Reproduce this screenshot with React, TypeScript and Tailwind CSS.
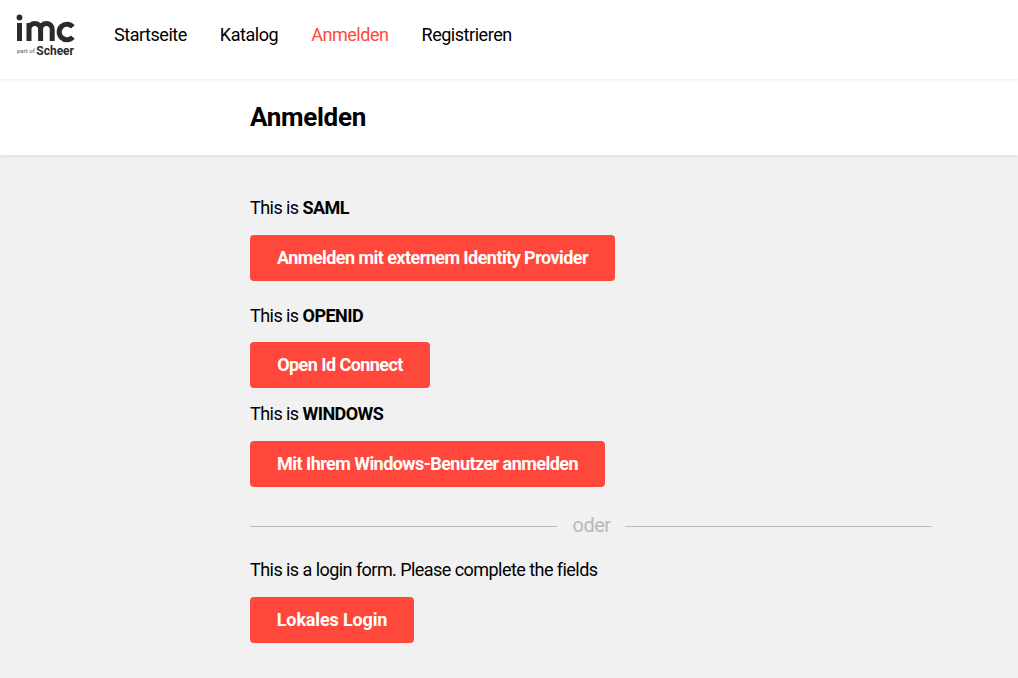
const font = "font-['Roboto',sans-serif]";

function Logo() {
  return (
    <div className="flex w-[60px] flex-col tracking-normal text-[#2b2b2b]">
      <svg width="60" height="30" viewBox="15 13 60 30" fill="none" stroke="currentColor" strokeWidth="5">
        <circle cx="19.5" cy="17.5" r="2.9" fill="currentColor" stroke="none" />
        <path d="M19.5 23V41" />
        <path d="M29 41V23M29 29.5c0-3.8 2.6-6 5.8-6s5.8 2.2 5.8 6V41M40.6 29.5c0-3.8 2.6-6 5.8-6s5.8 2.2 5.8 6V41" />
        <path d="M72.8 26.8A7.8 7.8 0 1 0 72.8 37.2" />
      </svg>
      <div className="mt-[3px] flex h-[11px] items-center justify-between pl-[2px] leading-none">
        <span className="text-[6px] text-[#555]">part of</span>
        <span className="mr-px text-[12px] font-bold leading-[11px]">Scheer</span>
      </div>
    </div>
  );
}

function Button({ label, width, tracking }: { label: string; width: string; tracking: string }) {
  return (
    <button className={`flex h-[46px] items-center justify-center rounded-[4px] bg-[#ff483b] pb-[2px] text-[18px] font-bold text-white ${width} ${tracking}`}>
      {label}
    </button>
  );
}

export default function App() {
  return (
    <div className={`flex min-h-[678px] flex-col bg-[#f1f1f1] text-[18px] tracking-[-0.55px] text-black ${font}`}>
      <header className="relative z-10 flex h-[79px] items-center gap-[33px] bg-white pb-[10px] pl-[15px] tracking-[-0.46px] shadow-[0_1px_4px_rgba(0,0,0,0.08)]">
        <div className="mr-[6px]"><Logo /></div>
        <a>Startseite</a>
        <a>Katalog</a>
        <a className="text-[#ff483b]">Anmelden</a>
        <a>Registrieren</a>
      </header>
      <div className="flex h-[76px] items-center bg-white pl-[250px] shadow-[0_1px_4px_rgba(0,0,0,0.1)]">
        <h1 className="text-[26px] font-bold tracking-[-0.3px]">Anmelden</h1>
      </div>
      <main className="flex w-[932px] flex-col items-start pl-[250px]">
        <p className="mt-[43px] leading-5">This is <b className="font-bold">SAML</b></p>
        <div className="mt-[17px]"><Button label="Anmelden mit externem Identity Provider" width="w-[365px]" tracking="tracking-[-0.55px]" /></div>
        <p className="mt-[25px] leading-5">This is <b className="font-bold">OPENID</b></p>
        <div className="mt-[16px]"><Button label="Open Id Connect" width="w-[180px]" tracking="tracking-[-0.55px]" /></div>
        <p className="mt-[16px] leading-5">This is <b className="font-bold">WINDOWS</b></p>
        <div className="mt-[17px]"><Button label="Mit Ihrem Windows-Benutzer anmelden" width="w-[355px]" tracking="tracking-[-0.55px]" /></div>
        <div className="mt-[27px] flex w-full items-center gap-4 text-[20px] text-[#b9b9b9]">
          <div className="h-px flex-1 bg-[#bdbdbd]" />
          <span className="leading-6 -translate-y-px">oder</span>
          <div className="-ml-px h-px flex-1 bg-[#bdbdbd]" />
        </div>
        <p className="mt-[22px] leading-5">This is a login form. Please complete the fields</p>
        <div className="mt-[17px]"><Button label="Lokales Login" width="w-[164px]" tracking="tracking-[-0.15px]" /></div>
      </main>
    </div>
  );
}
